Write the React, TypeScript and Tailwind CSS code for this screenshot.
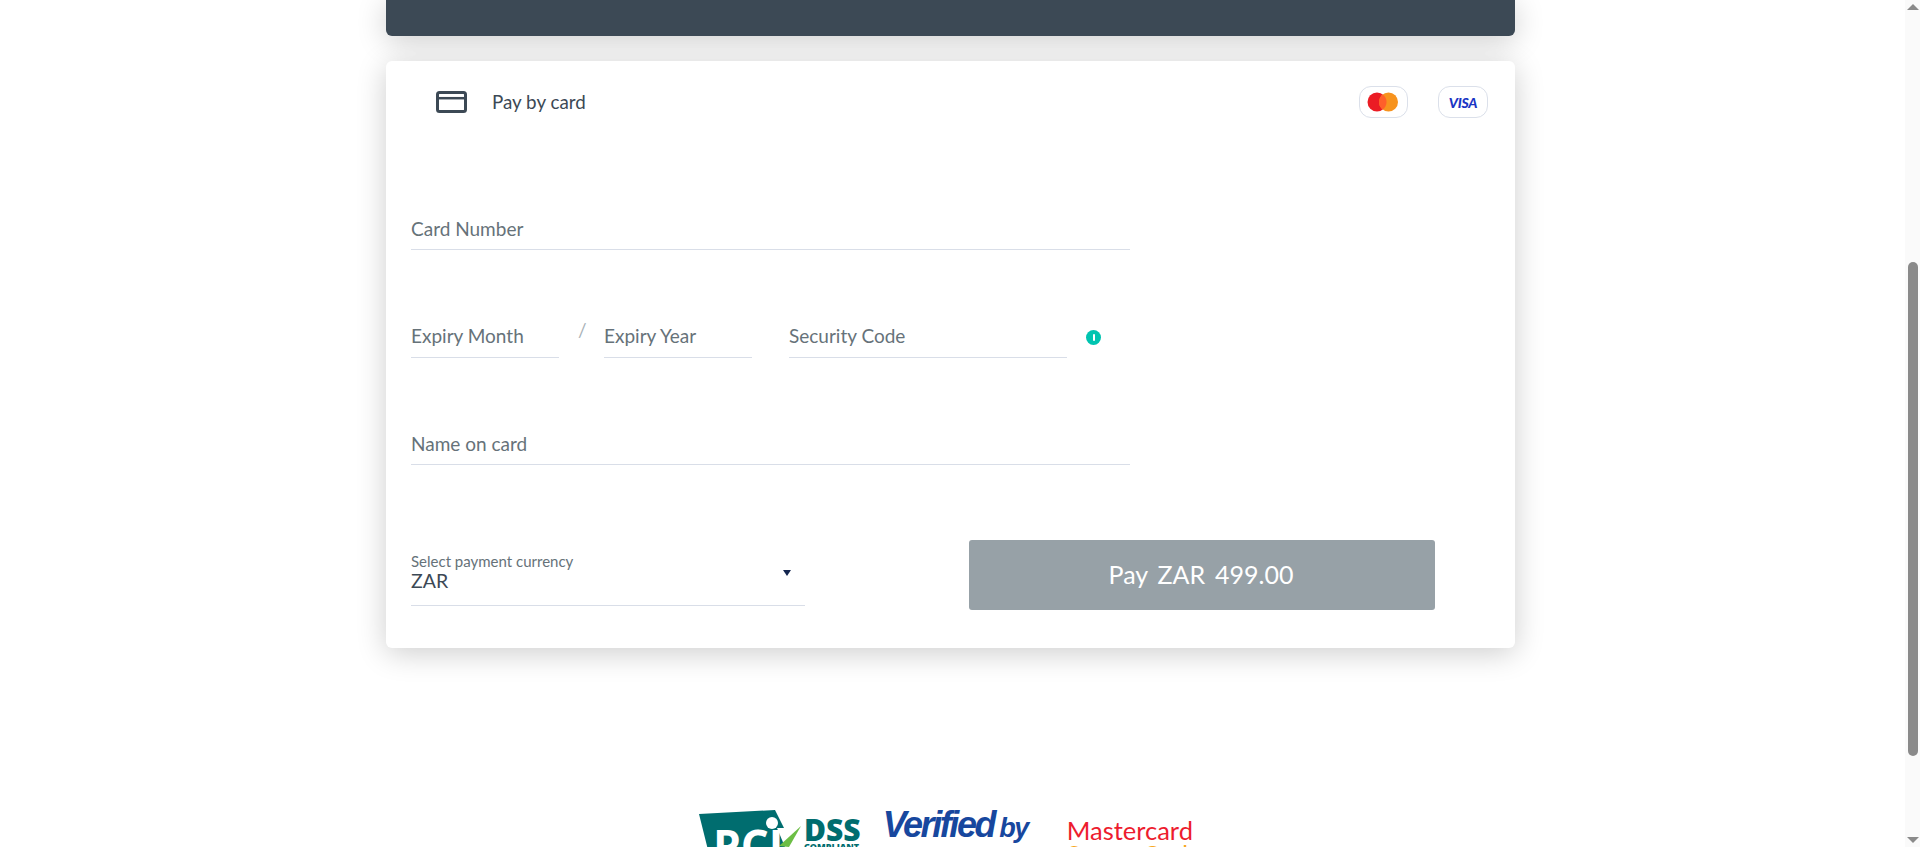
function Field({ label, className }: { label: string; className: string }) {
  return (
    <div className={`flex flex-col justify-end border-b border-[#d9dee8] text-[19px] leading-[24px] text-[#667279] h-[42px] ${className}`}>
      {label}
    </div>
  );
}

function Logos() {
  return (
    <div className="flex items-start ml-[699px] mt-[162px] h-[37px]">
      {/* pci badge */}
      <div className="relative w-[105px] h-[37px] overflow-hidden">
        <svg width="105" height="37" viewBox="0 0 105 37" className="absolute top-0 left-0">
          <path d="M0 4 L76 0 L106 60 L14 60 Z" fill="#006d6f" />
          <circle cx="73" cy="13" r="6" fill="#fff" />
          <path d="M78 18 L89 18 L97 37 L86 37 Z" fill="#fff" />
          <path d="M80 36 L102 16 L90 37 Z" fill="#6cbe45" />
        </svg>
        <span className="absolute left-[14px] top-[13px] text-[44px] leading-[44px] font-bold text-white font-['Open_Sans',sans-serif]">PCI</span>
      </div>
      <div className="flex flex-col mt-[9px] font-['Open_Sans',sans-serif] text-[#006d6f] font-extrabold">
        <span className="text-[30px] leading-[21px]">DSS</span>
        <span className="text-[9px] leading-[9px] mt-[2px]">COMPLIANT</span>
      </div>
      <div className="flex flex-col ml-[22px] text-[#17479e] italic font-bold font-['Liberation_Sans',sans-serif]">
        <div className="flex items-baseline leading-[30px]">
          <span className="text-[36px] tracking-[-2.4px]">Verified</span>
          <span className="text-[27px] ml-[5px] tracking-[-1.5px]">by</span>
        </div>
        <div className="relative text-[32px] leading-[30px] tracking-[1px] pl-[38px]">
          <span className="absolute left-[30px] top-[4px] w-[14px] h-[8px] bg-[#f7a823] rounded-tl-[8px]" />
          VISA
        </div>
      </div>
      <div className="flex flex-col ml-[39px] mt-[9px]">
        <span className="text-[25.5px] leading-[22px] text-[#ed1c2e]">Mastercard</span>
        <span className="text-[25.5px] leading-[26px] text-[#f7a823]">SecureCode</span>
      </div>
    </div>
  );
}

export default function App() {
  return (
    <div className="flex h-[847px] overflow-hidden bg-white font-['Lato',sans-serif]">
      <main className="flex-1 min-w-0 overflow-hidden">
        <div className="ml-[386px] w-[1129px]">
          <div className="h-[36px] bg-[#3c4955] rounded-b-[6px] shadow-[0_5px_30px_rgba(0,0,0,0.2)]" />

          <div className="mt-[25px] h-[587px] bg-white rounded-[6px] shadow-[0_5px_30px_rgba(0,0,0,0.2)]">
            <div className="flex items-center h-[32px] translate-y-[25px] pl-[50px] pr-[27px]">
              <svg width="31" height="22" viewBox="0 0 31 22" fill="none" stroke="#3c4955">
                <rect x="1.5" y="1.5" width="28" height="19" rx="2" strokeWidth="3" />
                <path d="M1 7.2H30" strokeWidth="2.5" />
              </svg>
              <span className="ml-[25px] text-[18.8px] text-[#3c4955]">Pay by card</span>
              <div className="ml-auto flex gap-[30px]">
                <div className="w-[49px] h-[32px] rounded-[12px] border border-[#dbe0ea] flex items-center justify-center">
                  <svg width="32" height="20" viewBox="0 0 32 20" className="-ml-[1px]">
                    <circle cx="10" cy="10" r="9.5" fill="#eb1c24" />
                    <circle cx="21.5" cy="10" r="9.5" fill="#f7931e" />
                    <path d="M15.75 2.4a9.5 9.5 0 0 1 0 15.2a9.5 9.5 0 0 1 0-15.2z" fill="#ff5f2a" />
                  </svg>
                </div>
                <div className="w-[50px] h-[32px] rounded-[12px] border border-[#dbe0ea] flex items-center justify-center text-[14px] font-black italic text-[#1a35c4] tracking-[-0.2px]">
                  VISA
                </div>
              </div>
            </div>

            <div className="pl-[25px] pt-[115px]">
              <Field label="Card Number" className="w-[719px] pb-[8px]" />

              <div className="flex items-start mt-[66px]">
                <Field label="Expiry Month" className="w-[148px] pb-[9px]" />
                <div className="w-[45px] pl-[19px] pt-[2px] text-[19px] leading-[24px] text-[#a9b1b7]">/</div>
                <Field label="Expiry Year" className="w-[148px] pb-[9px]" />
                <Field label="Security Code" className="w-[278px] ml-[37px] pb-[9px]" />
                <div className="ml-[19px] mt-[14px] w-[15px] h-[15px] rounded-full bg-[#00c4b0] flex items-center justify-center">
                  <div className="w-[2px] h-[7px] bg-white rounded-[1px]" />
                </div>
              </div>

              <Field label="Name on card" className="w-[719px] mt-[65px] pb-[8px]" />

              <div className="flex items-start mt-[75px]">
                <div className="relative w-[394px] h-[66px] border-b border-[#d9dee8]">
                  <div className="pt-[13px] text-[15px] leading-[17px] text-[#667279]">Select payment currency</div>
                  <div className="text-[19.5px] leading-[21px] text-[#3c4955]">ZAR</div>
                  <div className="absolute left-[372px] top-[30px] w-0 h-0 border-l-[4px] border-r-[4px] border-t-[6px] border-l-transparent border-r-transparent border-t-[#14264f]" />
                </div>
                <button className="ml-[164px] w-[466px] h-[70px] bg-[#97a1a7] rounded-[3px] text-white text-[25px] [word-spacing:3.5px] -indent-[2px]">
                  Pay ZAR 499.00
                </button>
              </div>
            </div>
          </div>
        </div>
        <Logos />
      </main>

      {/* scrollbar */}
      <div className="w-[15px] h-full bg-[#fafafa] flex flex-col items-center justify-between relative">
        <div className="mt-[4px] w-0 h-0 border-l-[6px] border-r-[6px] border-b-[6px] border-l-transparent border-r-transparent border-b-[#8a8a8a]" />
        <div className="absolute top-[262px] left-[3px] w-[10px] h-[494px] rounded-[5px] bg-[#8a8a8a]" />
        <div className="mb-[4px] w-0 h-0 border-l-[6px] border-r-[6px] border-t-[6px] border-l-transparent border-r-transparent border-t-[#8a8a8a]" />
      </div>
    </div>
  );
}
